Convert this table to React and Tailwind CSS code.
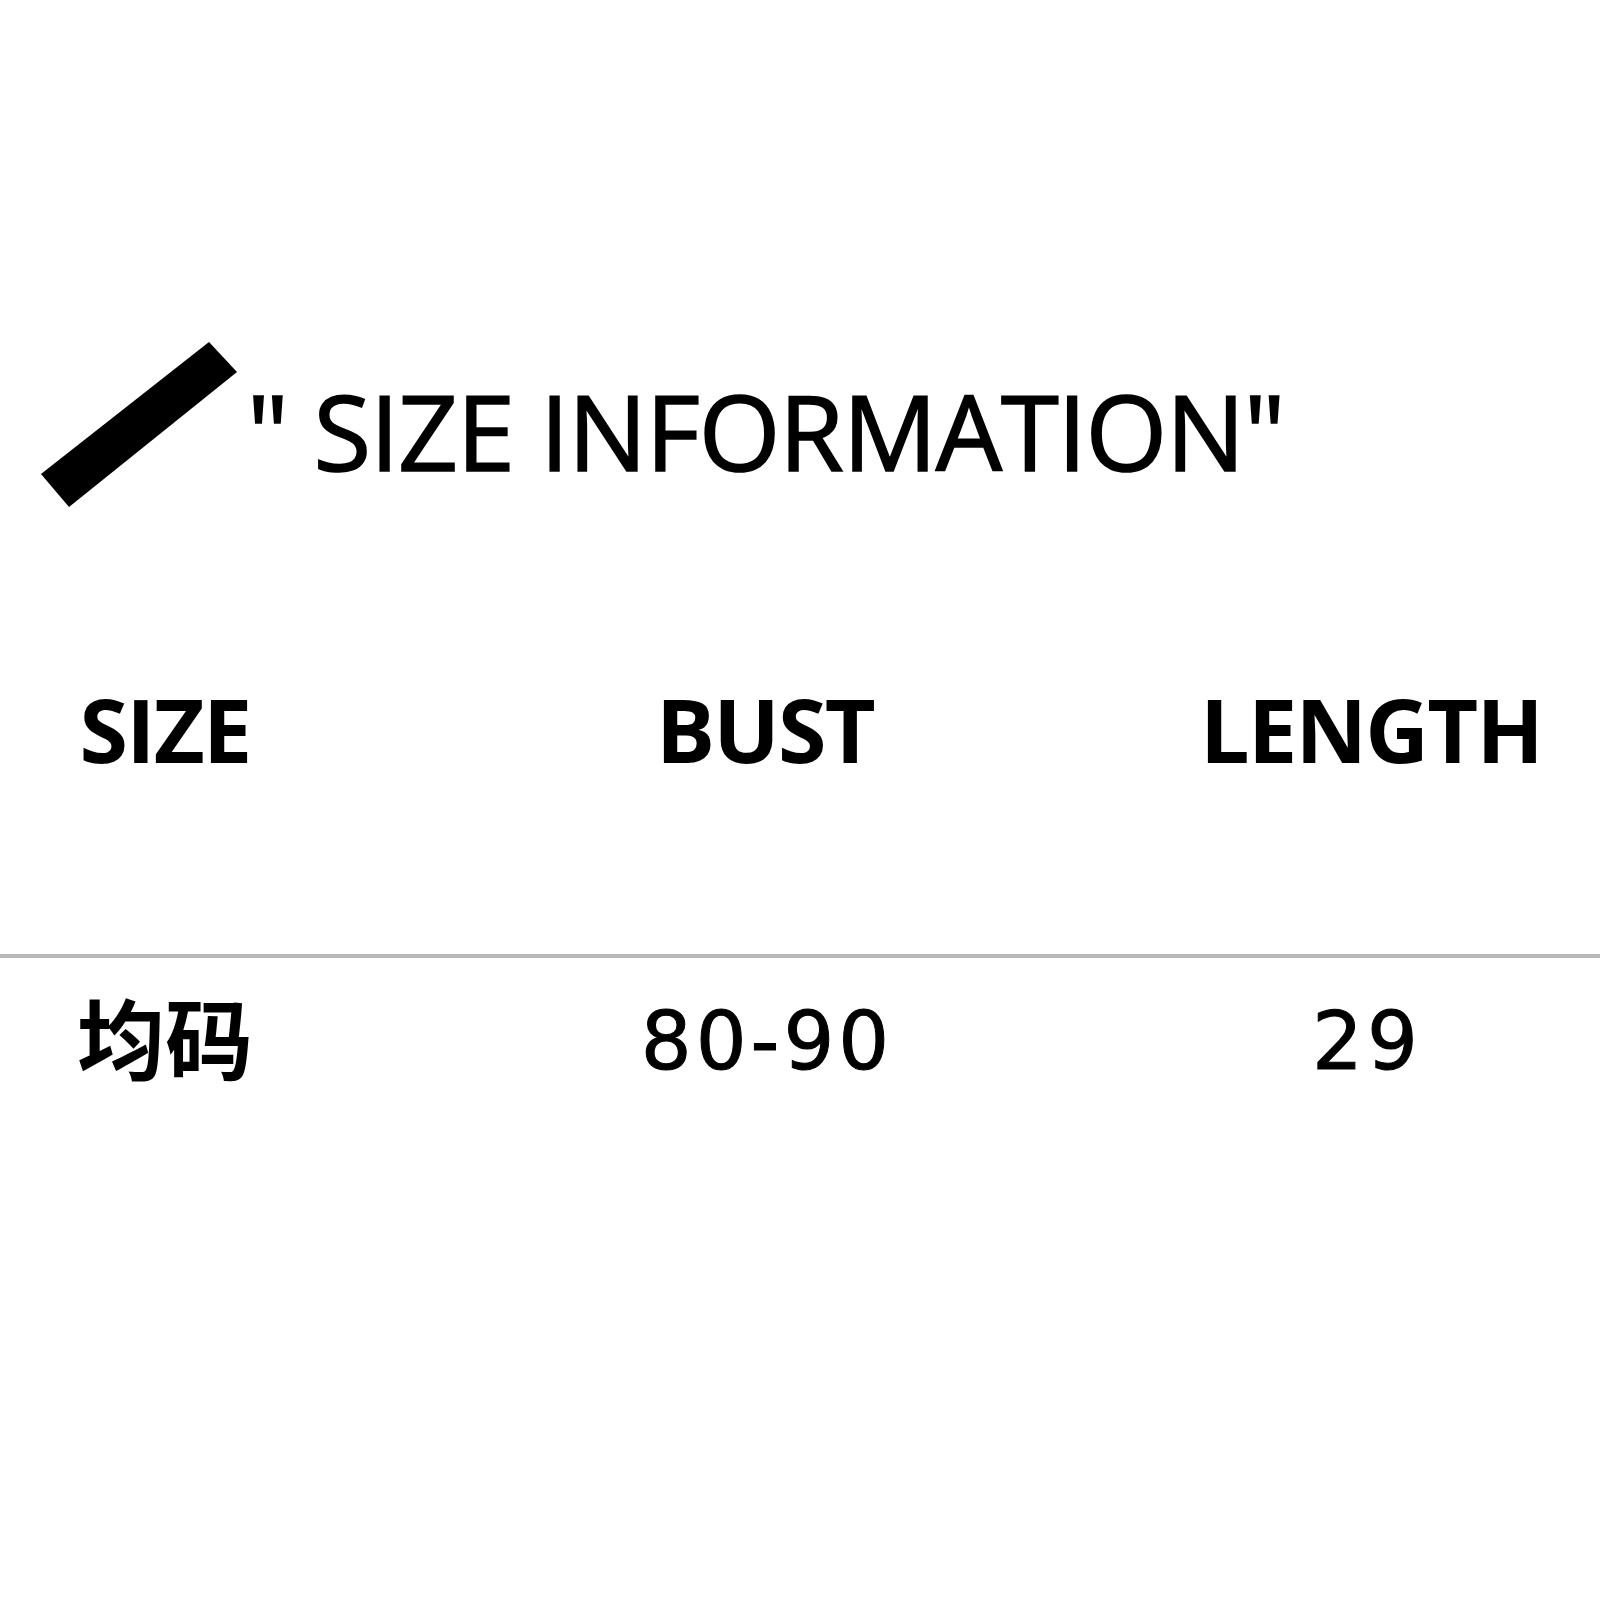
import React from "react";

const columns = [
  { head: "SIZE", value: "均码", cjk: true },
  { head: "BUST", value: "80-90" },
  { head: "LENGTH", value: "29" },
];

export default function App() {
  return (
    <div
      className="w-[1600px] h-[1600px] bg-white text-black pt-[342px]"
      style={{ fontFamily: '"Open Sans", "Noto Sans CJK SC", sans-serif' }}
    >
      {/* title with the slanted bar */}
      <div className="flex items-start pl-[41px]">
        <svg width="196" height="165" viewBox="0 0 196 165" className="shrink-0">
          <polygon points="168,0 196,30 28,165 0,132" fill="#000" />
        </svg>
        <div className="ml-[10px] mt-[36px] text-[105px] leading-none tracking-[-0.012em] whitespace-nowrap [-webkit-text-stroke:1.6px_black]">
          " SIZE INFORMATION"
        </div>
      </div>

      <div className="grid grid-cols-[330px_870px_330px] mt-[178px]">
        {columns.map((c) => (
          <div key={c.head} className="text-center text-[88px] font-bold leading-none tracking-[-0.02em]">
            {c.head}
          </div>
        ))}
      </div>

      <div className="mt-[181px] h-[4px] bg-[#b8b8b8]" />

      <div className="grid grid-cols-[330px_870px_330px] mt-[37px]">
        {columns.map((c) =>
          c.cjk ? (
            <div key={c.head} className="text-center text-[88px] font-bold leading-none">
              {c.value}
            </div>
          ) : (
            <div
              key={c.head}
              className="text-center text-[80px] leading-none tracking-[0.05em] pl-[4px] mt-[7px] [-webkit-text-stroke:1px_black]"
              style={{ fontFamily: '"DejaVu Sans", sans-serif' }}
            >
              {c.value}
            </div>
          )
        )}
      </div>
    </div>
  );
}
